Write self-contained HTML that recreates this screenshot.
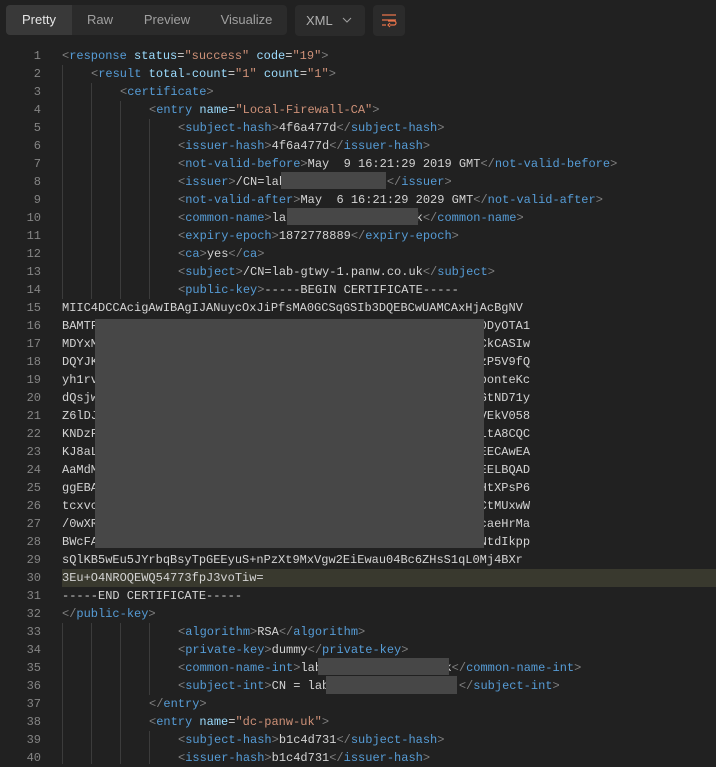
<!DOCTYPE html><html><head><meta charset="utf-8"><style>
body{margin:0;width:716px;height:764px;background:#212121;overflow:hidden;position:relative;font-family:"Liberation Sans",sans-serif}
.seg{position:absolute;left:6px;top:5px;width:281px;height:30px;background:#2b2b2b;border-radius:4px}
.seg div{position:absolute;top:0;height:30px;line-height:30px;font-size:13px;color:#a0a0a0;text-align:center}
.btn{position:absolute;top:5px;height:31px;background:#2b2b2b;border-radius:4px}
.ln{position:absolute;left:0;width:41px;text-align:right;color:#858585;font:12px/18px "Liberation Mono",monospace}
.c{position:absolute;left:62px;white-space:pre;color:#d4d4d4;font:12px/18px "Liberation Mono",monospace}
.p{color:#808080}.t{color:#569cd6}.a{color:#9cdcfe}.s{color:#ce9178}
.g{position:absolute;width:1px;background:#3c3c3c}
.r{position:absolute;background:#474747}
</style></head><body>
<div class="seg"><div style="left:0;width:66px;background:#393939;color:#e6e6e6;border-radius:4px 0 0 4px">Pretty</div><div style="left:66px;width:56px">Raw</div><div style="left:122px;width:78px">Preview</div><div style="left:200px;width:81px">Visualize</div></div>
<div class="btn" style="left:295px;width:70px"><span style="position:absolute;left:11px;top:8px;font-size:13px;color:#b0b0b0">XML</span><svg style="position:absolute;left:47px;top:12px" width="10" height="7"><path d="M1 1L5 5L9 1" stroke="#a0a0a0" fill="none"/></svg></div>
<div class="btn" style="left:373px;width:32px"><svg style="position:absolute;left:8px;top:8px" width="16" height="16"><path d="M1 2H15M1 7H15M1 12H5M9 12H13A2 2 0 0 0 13 8H7M9 10L7 12L9 14" stroke="#e8734a" fill="none" stroke-width="1.2"/></svg></div>
<div class="g" style="left:62px;top:65px;height:234px"></div><div class="g" style="left:91px;top:83px;height:216px"></div><div class="g" style="left:120px;top:101px;height:198px"></div><div class="g" style="left:149px;top:119px;height:180px"></div>
<div class="g" style="left:62px;top:623px;height:141px"></div><div class="g" style="left:91px;top:623px;height:141px"></div><div class="g" style="left:120px;top:623px;height:141px"></div><div class="g" style="left:149px;top:623px;height:72px"></div><div class="g" style="left:149px;top:731px;height:33px"></div>
<div style="position:absolute;left:62px;top:569px;width:654px;height:18px;background:#39392e"></div>
<div id="L"></div>
<script>
var L=[
[0,'<span class="p">&lt;</span><span class="t">response</span> <span class="a">status</span>=<span class="s">"success"</span> <span class="a">code</span>=<span class="s">"19"</span><span class="p">&gt;</span>'],
[1,'<span class="p">&lt;</span><span class="t">result</span> <span class="a">total-count</span>=<span class="s">"1"</span> <span class="a">count</span>=<span class="s">"1"</span><span class="p">&gt;</span>'],
[2,'<span class="p">&lt;</span><span class="t">certificate</span><span class="p">&gt;</span>'],
[3,'<span class="p">&lt;</span><span class="t">entry</span> <span class="a">name</span>=<span class="s">"Local-Firewall-CA"</span><span class="p">&gt;</span>'],
[4,'T(subject-hash)4f6a477dE(subject-hash)'],
[4,'T(issuer-hash)4f6a477dE(issuer-hash)'],
[4,'T(not-valid-before)May  9 16:21:29 2019 GMTE(not-valid-before)'],
[4,'T(issuer)/CN=lab             kE(issuer)'],
[4,'T(not-valid-after)May  6 16:21:29 2029 GMTE(not-valid-after)'],
[4,'T(common-name)lab                 kE(common-name)'],
[4,'T(expiry-epoch)1872778889E(expiry-epoch)'],
[4,'T(ca)yesE(ca)'],
[4,'T(subject)/CN=lab-gtwy-1.panw.co.ukE(subject)'],
[4,'T(public-key)-----BEGIN CERTIFICATE-----'],
[0,'MIIC4DCCAcigAwIBAgIJANuycOxJiPfsMA0GCSqGSIb3DQEBCwUAMCAxHjAcBgNV'],
[0,'BAMTF                                                     0DyOTA1'],
[0,'MDYxM                                                     CkCASIw'],
[0,'DQYJK                                                     zP5V9fQ'],
[0,'yh1rv                                                     bonteKc'],
[0,'dQsjw                                                     GtND71y'],
[0,'Z6lDJ                                                     VEkV058'],
[0,'KNDzF                                                     LtA8CQC'],
[0,'KJ8aL                                                     EECAwEA'],
[0,'AaMdM                                                     EELBQAD'],
[0,'ggEBA                                                     HtXPsP6'],
[0,'tcxvc                                                     CtMUxwW'],
[0,'/0wXR                                                     caeHrMa'],
[0,'BWcFA                                                     NtdIkpp'],
[0,'sQlKB5wEu5JYrbqBsyTpGEEyuS+nPzXt9MxVgw2EiEwau04Bc6ZHsS1qL0Mj4BXr'],
[0,'3Eu+O4NROQEWQ54773fpJ3voTiw='],
[0,'-----END CERTIFICATE-----'],
[0,'E(public-key)'],
[4,'T(algorithm)RSAE(algorithm)'],
[4,'T(private-key)dummyE(private-key)'],
[4,'T(common-name-int)lab                 kE(common-name-int)'],
[4,'T(subject-int)CN = lab                  E(subject-int)'],
[3,'E(entry)'],
[3,'<span class="p">&lt;</span><span class="t">entry</span> <span class="a">name</span>=<span class="s">"dc-panw-uk"</span><span class="p">&gt;</span>'],
[4,'T(subject-hash)b1c4d731E(subject-hash)'],
[4,'T(issuer-hash)b1c4d731E(issuer-hash)']];
var h='';L.forEach(function(l,i){var y=47+18*i;var s=l[1].replace(/T\(([^)]+)\)/g,'<span class="p">&lt;</span><span class="t">$1</span><span class="p">&gt;</span>').replace(/E\(([^)]+)\)/g,'<span class="p">&lt;/</span><span class="t">$1</span><span class="p">&gt;</span>');
h+='<div class="ln" style="top:'+y+'px">'+(i+1)+'</div><div class="c" style="top:'+y+'px;left:'+(62+29*l[0])+'px">'+s+'</div>';});
document.getElementById('L').innerHTML=h;
</script>
<div class="r" style="left:281px;top:172px;width:105px;height:17px"></div>
<div class="r" style="left:287px;top:208px;width:131px;height:17px"></div>
<div class="r" style="left:95px;top:319px;width:389px;height:229px"></div>
<div class="r" style="left:318px;top:658px;width:131px;height:17px"></div>
<div class="r" style="left:326px;top:676px;width:131px;height:18px"></div>
</body></html>
